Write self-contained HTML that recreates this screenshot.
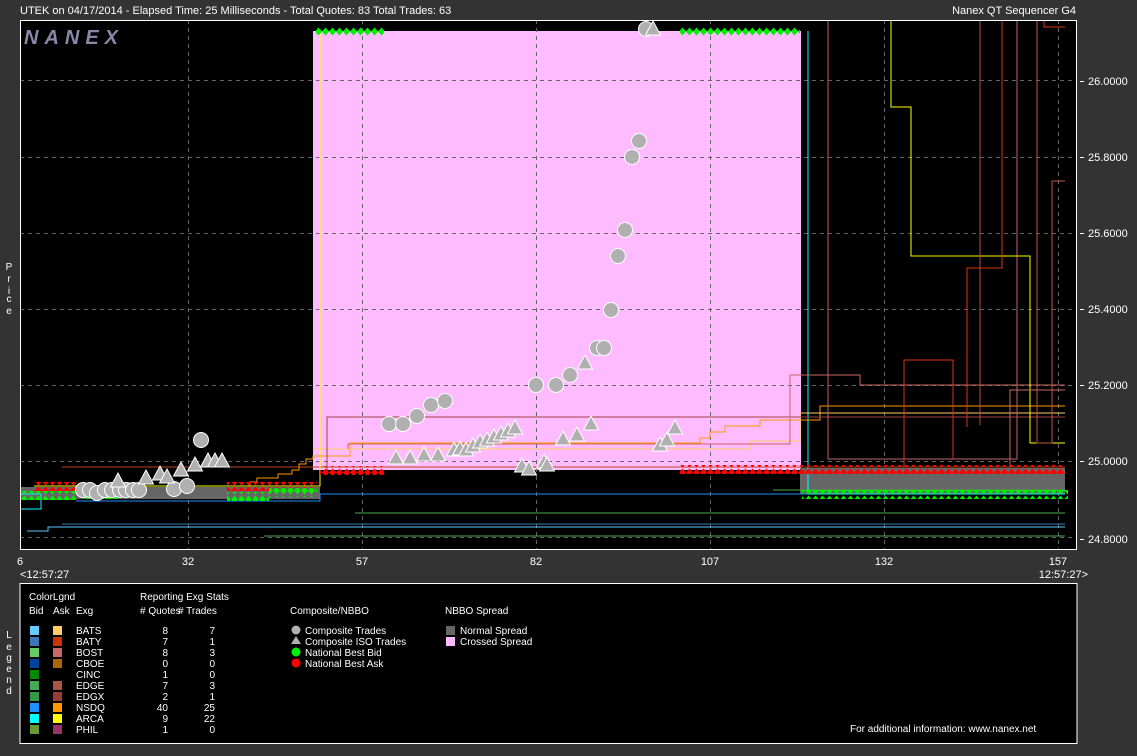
<!DOCTYPE html>
<html><head><meta charset="utf-8"><style>
html,body{margin:0;padding:0;background:#333;width:1137px;height:756px;overflow:hidden}
svg{display:block;font-family:"Liberation Sans",sans-serif}
</style></head><body>
<svg width="1137" height="756" viewBox="0 0 1137 756" xmlns="http://www.w3.org/2000/svg">
<defs>
<pattern id="dg" x="0" y="0" width="7" height="9" patternUnits="userSpaceOnUse"><polygon points="3.5,0.5 7,4.5 3.5,8.5 0,4.5" fill="#00ee00"/></pattern>
<pattern id="dr" x="0" y="0" width="7" height="9" patternUnits="userSpaceOnUse"><polygon points="3.5,0.5 7,4.5 3.5,8.5 0,4.5" fill="#ff0000"/></pattern>
<g id="c"><circle r="7.5" fill="#b0b0b0" stroke="#fff" stroke-width="1"/></g>
<g id="t"><polygon points="0,-8 7.5,6 -7.5,6" fill="#b0b0b0" stroke="#fff" stroke-width="1"/></g>
</defs>
<rect width="1137" height="756" fill="#333"/>
<text x="20" y="14" fill="#fff" font-size="11">UTEK on 04/17/2014  -  Elapsed Time: 25 Milliseconds  -  Total Quotes: 83  Total Trades: 63</text>
<text x="1076" y="14" fill="#fff" font-size="11" text-anchor="end">Nanex QT Sequencer G4</text>
<rect x="20" y="20" width="1057" height="530" fill="#000"/>
<!-- pink crossed -->
<rect x="313" y="31" width="488" height="439" fill="#ffbbff"/>
<!-- normal spread -->
<rect x="800" y="468" width="265" height="26" fill="#666"/>
<rect x="20" y="487" width="300" height="12" fill="#666"/>
<!-- grid -->
<g stroke="#666" stroke-dasharray="4,4" stroke-width="1">
<line x1="188.5" y1="20" x2="188.5" y2="550"/><line x1="362.5" y1="20" x2="362.5" y2="550"/><line x1="536.5" y1="20" x2="536.5" y2="550"/><line x1="710.5" y1="20" x2="710.5" y2="550"/><line x1="884.5" y1="20" x2="884.5" y2="550"/><line x1="1058.5" y1="20" x2="1058.5" y2="550"/>
<line x1="20" y1="80.5" x2="1077" y2="80.5"/><line x1="20" y1="157.5" x2="1077" y2="157.5"/><line x1="20" y1="233.5" x2="1077" y2="233.5"/><line x1="20" y1="309.5" x2="1077" y2="309.5"/><line x1="20" y1="385.5" x2="1077" y2="385.5"/><line x1="20" y1="461.5" x2="1077" y2="461.5"/><line x1="20" y1="537.5" x2="1077" y2="537.5"/>
</g>
<text x="24" y="44" fill="#8888aa" font-size="20" font-style="italic" letter-spacing="6" font-weight="bold">NANEX</text>
<!-- lines -->
<g fill="none" stroke-width="1">
<polyline stroke="#5bc8ff" points="27,531 48,531 48,527 1065,527"/>
<polyline stroke="#3a78b8" points="62,524 1065,524"/>
<polyline stroke="#4aa84a" points="264,536 1065,536"/>
<polyline stroke="#4aa84a" points="355,513 1065,513"/>
<polyline stroke="#4aa84a" points="773,490 1065,490"/>
<polyline stroke="#1e90ff" points="76,501 320,501 320,494 1065,494"/>
<polyline stroke="#00ffff" points="20,494 41,494 41,509 20,509"/>
<polyline stroke="#00ffff" points="808,31 808,494 1065,494"/>
<polyline stroke="#bb4422" points="62,467 320,467 1065,467"/>
<polyline stroke="#ffff00" points="34,486 320,486 320,31"/>
<polyline stroke="#ff9900" points="250,486 250,482 257,482 257,478 278,478 278,474 292,474 292,470 299,470 299,464 306,464 306,459 313,459 313,456 350,456 350,443 700,443 700,438 710,438 710,432 725,432 725,426 760,426 760,420 820,420 820,406 1065,406"/>
<polyline stroke="#ffcc66" points="313,449 700,449 750,449 750,441 800,441 800,413 1065,413"/>
<polyline stroke="#a04040" points="327,470 327,417 800,417 800,417 1065,417"/>
<polyline stroke="#cc6666" points="348,449 348,444 790,444 790,375 860,375 860,385 1065,385"/>
<polyline stroke="#bb6666" points="828,20 828,459 1017,459 1017,20"/>
<polyline stroke="#ffff00" points="891,20 891,107 911,107 911,256 1030,256 1030,443 1065,443"/>
<polyline stroke="#dd3311" points="1002,20 1002,268 967,268 967,427"/>
<polyline stroke="#dd3311" points="904,467 904,360 953,360 953,459"/>
<polyline stroke="#bb5544" points="1037,20 1037,443 1052,443 1052,181 1065,181"/>
<polyline stroke="#dd3311" points="1044,20 1044,27 1065,27"/>
<polyline stroke="#cc6666" points="1010,467 1010,390 1065,390"/>
<polyline stroke="#aa5533" points="980,20 980,425"/>
</g>
<!-- diamonds -->
<rect x="20" y="491" width="56" height="9" fill="url(#dg)"/>
<rect x="34" y="482" width="42" height="9" fill="url(#dr)"/>
<rect x="83" y="490" width="35" height="9" fill="url(#dg)"/>
<rect x="227" y="482" width="90" height="9" fill="url(#dr)"/>
<rect x="227" y="492" width="42" height="9" fill="url(#dg)"/>
<rect x="269" y="488" width="48" height="9" fill="url(#dg)"/>
<rect x="316" y="27" width="68" height="9" fill="url(#dg)"/>
<rect x="680" y="27" width="120" height="9" fill="url(#dg)"/>
<rect x="320" y="466" width="64" height="9" fill="url(#dr)"/>
<rect x="680" y="465" width="385" height="9" fill="url(#dr)"/>
<rect x="802" y="490" width="266" height="9" fill="url(#dg)"/>
<!-- trades -->
<g>
<use href="#c" x="83" y="490"/><use href="#c" x="90" y="490"/><use href="#c" x="97" y="493"/><use href="#c" x="105" y="490"/><use href="#c" x="112" y="490"/><use href="#c" x="120" y="490"/><use href="#c" x="126" y="490"/><use href="#c" x="133" y="490"/><use href="#c" x="139" y="490"/><use href="#c" x="174" y="489"/><use href="#c" x="187" y="486"/><use href="#c" x="201" y="440"/>
<use href="#t" x="118" y="481"/><use href="#t" x="146" y="478"/><use href="#t" x="160" y="474"/><use href="#t" x="167" y="477"/><use href="#t" x="181" y="470"/><use href="#t" x="195" y="465"/><use href="#t" x="208" y="461"/><use href="#t" x="215" y="461"/><use href="#t" x="222" y="461"/>
<use href="#c" x="389" y="424"/><use href="#c" x="403" y="424"/><use href="#c" x="417" y="416"/><use href="#c" x="431" y="405"/><use href="#c" x="445" y="401"/><use href="#c" x="536" y="385"/><use href="#c" x="556" y="385"/><use href="#c" x="570" y="375"/><use href="#c" x="597" y="348"/><use href="#c" x="604" y="348"/><use href="#c" x="611" y="310"/><use href="#c" x="618" y="256"/><use href="#c" x="625" y="230"/><use href="#c" x="632" y="157"/><use href="#c" x="639" y="141"/><use href="#c" x="646" y="29"/>
<use href="#t" x="396" y="458"/><use href="#t" x="410" y="458"/><use href="#t" x="424" y="455"/><use href="#t" x="438" y="455"/><use href="#t" x="454" y="450"/><use href="#t" x="460" y="449"/><use href="#t" x="466" y="450"/><use href="#t" x="473" y="446"/><use href="#t" x="480" y="442"/><use href="#t" x="487" y="440"/><use href="#t" x="494" y="437"/><use href="#t" x="501" y="434"/><use href="#t" x="508" y="431"/><use href="#t" x="515" y="428"/>
<use href="#t" x="522" y="466"/><use href="#t" x="529" y="469"/><use href="#t" x="544" y="462"/><use href="#t" x="547" y="465"/><use href="#t" x="563" y="439"/><use href="#t" x="577" y="435"/><use href="#t" x="591" y="424"/><use href="#t" x="585" y="363"/><use href="#t" x="653" y="29"/><use href="#t" x="660" y="445"/><use href="#t" x="667" y="440"/><use href="#t" x="675" y="428"/>
</g>
<rect x="20.5" y="20.5" width="1056" height="529" fill="none" stroke="#fff"/>
<!-- axes -->
<g fill="#fff" font-size="11">
<text x="1088" y="85">26.0000</text><text x="1088" y="161">25.8000</text><text x="1088" y="237">25.6000</text><text x="1088" y="313">25.4000</text><text x="1088" y="389">25.2000</text><text x="1088" y="465">25.0000</text><text x="1088" y="543">24.8000</text>
<g stroke="#fff"><line x1="1080" y1="81.5" x2="1084" y2="81.5"/><line x1="1080" y1="157.5" x2="1084" y2="157.5"/><line x1="1080" y1="233.5" x2="1084" y2="233.5"/><line x1="1080" y1="309.5" x2="1084" y2="309.5"/><line x1="1080" y1="385.5" x2="1084" y2="385.5"/><line x1="1080" y1="461.5" x2="1084" y2="461.5"/><line x1="1080" y1="539.5" x2="1084" y2="539.5"/></g>
<text x="20" y="565" text-anchor="middle">6</text><text x="188" y="565" text-anchor="middle">32</text><text x="362" y="565" text-anchor="middle">57</text><text x="536" y="565" text-anchor="middle">82</text><text x="710" y="565" text-anchor="middle">107</text><text x="884" y="565" text-anchor="middle">132</text><text x="1058" y="565" text-anchor="middle">157</text>
<text x="20" y="578">&lt;12:57:27</text><text x="1088" y="578" text-anchor="end">12:57:27&gt;</text>
<g text-anchor="middle" font-size="10"><text x="9" y="270">P</text><text x="9" y="282">r</text><text x="9" y="294">i</text><text x="9" y="302">c</text><text x="9" y="314">e</text>
<text x="9" y="638">L</text><text x="9" y="650">e</text><text x="9" y="661">g</text><text x="9" y="672">e</text><text x="9" y="683">n</text><text x="9" y="694">d</text></g>
</g>
<!-- legend -->
<rect x="20" y="583.5" width="1057" height="160" fill="#000" stroke="#fff"/>
<g fill="#fff" font-size="10">
<text x="29" y="600">ColorLgnd</text><text x="140" y="600">Reporting Exg Stats</text>
<text x="29" y="614">Bid</text><text x="53" y="614">Ask</text><text x="76" y="614">Exg</text><text x="140" y="614"># Quotes</text><text x="178" y="614"># Trades</text>
<text x="290" y="614">Composite/NBBO</text><text x="445" y="614">NBBO Spread</text>
</g>
<g>
<rect x="30" y="626" width="9" height="9" fill="#66ccff"/><rect x="53" y="626" width="9" height="9" fill="#ffcc66"/>
<rect x="30" y="637" width="9" height="9" fill="#3a78b8"/><rect x="53" y="637" width="9" height="9" fill="#cc3300"/>
<rect x="30" y="648" width="9" height="9" fill="#66cc66"/><rect x="53" y="648" width="9" height="9" fill="#cc6666"/>
<rect x="30" y="659" width="9" height="9" fill="#004499"/><rect x="53" y="659" width="9" height="9" fill="#aa6600"/>
<rect x="30" y="670" width="9" height="9" fill="#008800"/>
<rect x="30" y="681" width="9" height="9" fill="#44aa55"/><rect x="53" y="681" width="9" height="9" fill="#aa5544"/>
<rect x="30" y="692" width="9" height="9" fill="#339944"/><rect x="53" y="692" width="9" height="9" fill="#993c33"/>
<rect x="30" y="703" width="9" height="9" fill="#1e90ff"/><rect x="53" y="703" width="9" height="9" fill="#ff9900"/>
<rect x="30" y="714" width="9" height="9" fill="#00ffff"/><rect x="53" y="714" width="9" height="9" fill="#ffff00"/>
<rect x="30" y="725" width="9" height="9" fill="#669933"/><rect x="53" y="725" width="9" height="9" fill="#993366"/>
</g>
<g fill="#fff" font-size="10">
<text x="76" y="634">BATS</text><text x="76" y="645">BATY</text><text x="76" y="656">BOST</text><text x="76" y="667">CBOE</text><text x="76" y="678">CINC</text><text x="76" y="689">EDGE</text><text x="76" y="700">EDGX</text><text x="76" y="711">NSDQ</text><text x="76" y="722">ARCA</text><text x="76" y="733">PHIL</text>
<g text-anchor="end"><text x="168" y="634">8</text><text x="168" y="645">7</text><text x="168" y="656">8</text><text x="168" y="667">0</text><text x="168" y="678">1</text><text x="168" y="689">7</text><text x="168" y="700">2</text><text x="168" y="711">40</text><text x="168" y="722">9</text><text x="168" y="733">1</text>
<text x="215" y="634">7</text><text x="215" y="645">1</text><text x="215" y="656">3</text><text x="215" y="667">0</text><text x="215" y="678">0</text><text x="215" y="689">3</text><text x="215" y="700">1</text><text x="215" y="711">25</text><text x="215" y="722">22</text><text x="215" y="733">0</text></g>
<text x="305" y="634">Composite Trades</text><text x="305" y="645">Composite ISO Trades</text><text x="305" y="656">National Best Bid</text><text x="305" y="667">National Best Ask</text>
<text x="460" y="634">Normal Spread</text><text x="460" y="645">Crossed Spread</text>
<text x="850" y="732">For additional information: www.nanex.net</text>
</g>
<circle cx="296" cy="630" r="4.5" fill="#b0b0b0"/>
<polygon points="296,636 301,644 291,644" fill="#b0b0b0"/>
<circle cx="296" cy="652" r="4.5" fill="#00ee00"/>
<circle cx="296" cy="663" r="4.5" fill="#ff0000"/>
<rect x="446" y="626" width="9" height="9" fill="#666"/>
<rect x="446" y="637" width="9" height="9" fill="#ffbbff"/>
</svg>
</body></html>
